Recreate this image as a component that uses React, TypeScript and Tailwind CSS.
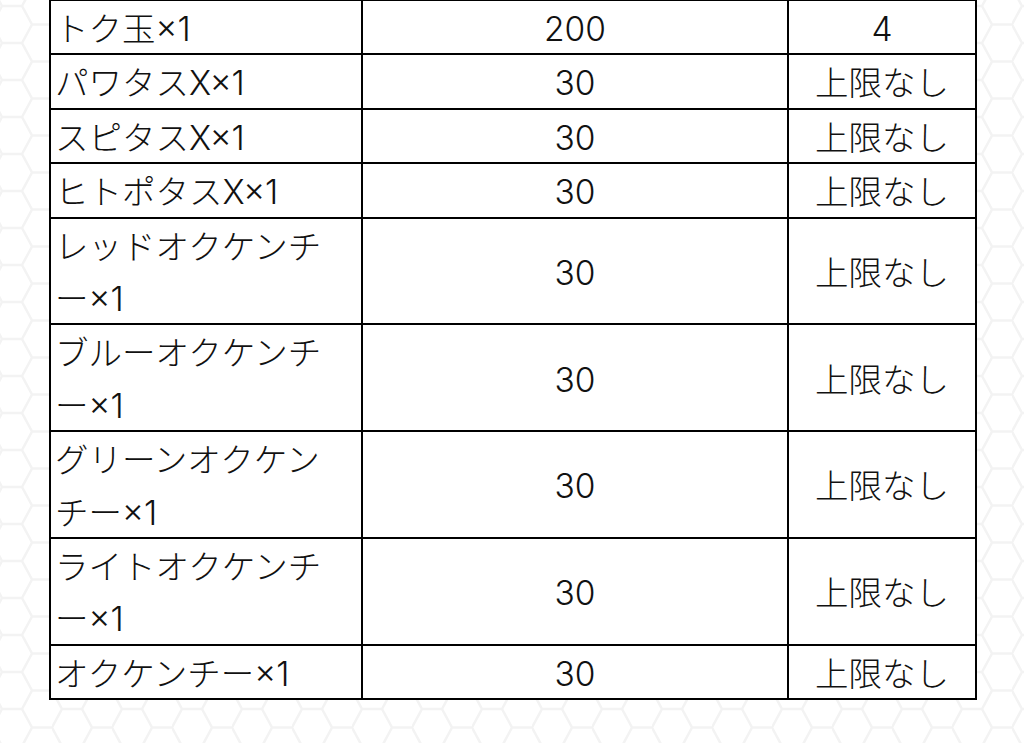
const rows: { name: string[]; cost: string; limit: string }[] = [
  { name: ["トク玉×1"], cost: "200", limit: "4" },
  { name: ["パワタスX×1"], cost: "30", limit: "上限なし" },
  { name: ["スピタスX×1"], cost: "30", limit: "上限なし" },
  { name: ["ヒトポタスX×1"], cost: "30", limit: "上限なし" },
  { name: ["レッドオクケンチ", "ー×1"], cost: "30", limit: "上限なし" },
  { name: ["ブルーオクケンチ", "ー×1"], cost: "30", limit: "上限なし" },
  { name: ["グリーンオクケン", "チー×1"], cost: "30", limit: "上限なし" },
  { name: ["ライトオクケンチ", "ー×1"], cost: "30", limit: "上限なし" },
  { name: ["オクケンチー×1"], cost: "30", limit: "上限なし" },
]

function HexBackground() {
  return (
    <svg className="absolute inset-0 h-full w-full" aria-hidden="true">
      <defs>
        <pattern id="hex" width="60" height="37" patternUnits="userSpaceOnUse" x="-8" y="6">
          <path
            d="M0 18.5 L10 0 L30 0 L40 18.5 L30 37 L10 37 Z M40 18.5 L60 18.5"
            fill="none"
            stroke="#f3f3f3"
            strokeWidth="2.5"
          />
        </pattern>
      </defs>
      <rect width="100%" height="100%" fill="url(#hex)" />
    </svg>
  )
}

const cell = "border-2 border-black py-0 align-middle text-[33.5px] font-light leading-[52.4px]"

export default function App() {
  return (
    <div
      className="relative h-[743px] w-[1024px] overflow-hidden bg-white text-[#111]"
      style={{ fontFamily: 'Inter, "Noto Sans CJK JP", sans-serif' }}
    >
      <HexBackground />
      <table className="relative ml-[49px] mt-[-1px] w-[926px] table-fixed border-collapse bg-white">
        <colgroup>
          <col className="w-[312px]" />
          <col className="w-[426px]" />
          <col className="w-[188px]" />
        </colgroup>
        <tbody>
          {rows.map((r, i) => (
            <tr key={i}>
              <td className={`${cell} whitespace-nowrap px-[4px]`}>
                <div className="translate-y-[2px]">
                  {r.name.map((line, j) => (
                    <div key={j}>{line}</div>
                  ))}
                </div>
              </td>
              <td className={`${cell} px-0 text-center`}>
                <div className="translate-y-[2px]">{r.cost}</div>
              </td>
              <td className={`${cell} px-0 text-center`}>
                <div className="translate-y-[2px]">{r.limit}</div>
              </td>
            </tr>
          ))}
        </tbody>
      </table>
    </div>
  )
}
